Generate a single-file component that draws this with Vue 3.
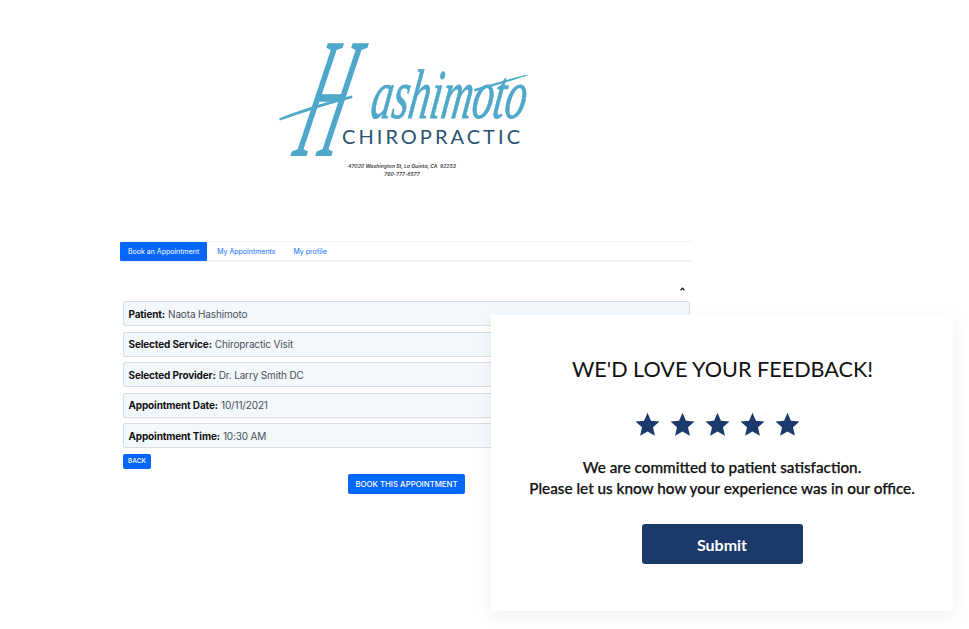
<template>
  <div class="page">
    <main class="booking">
      <header class="brand">
        <svg class="logo" viewBox="270 36 265 110" width="265" height="110" role="img" aria-label="Hashimoto Chiropractic">
          <text class="script-cap" transform="matrix(.36 0 -.27 1 291 156)">H</text>
          <path class="swash" d="M279 118.5 C 300 110 325 102 352 95.5 L 352.5 98 C 325 105 302 113 280 120.5 Z" />
          <path class="swash" d="M474 89 C 492 84 510 79 527 74.5 L 527.5 75.5 C 510 81 492 87 474.5 91.5 Z" />
          <text class="script" transform="translate(369 118) skewX(-9)" textLength="155" lengthAdjust="spacingAndGlyphs">ashimoto</text>
          <text class="wordmark" x="342" y="144" textLength="178">CHIROPRACTIC</text>
        </svg>
        <p class="address">47020 Washington St, La Quinta, CA&nbsp; 92253</p>
        <p class="address">760-777-8577</p>
      </header>

      <nav class="tabs">
        <a v-for="(tab, i) in tabs" :key="tab" class="tab" :class="{ active: i === 0 }">{{ tab }}</a>
      </nav>

      <div class="toggle">
        <svg viewBox="0 0 6 4" width="5" height="4"><path d="M.7 3.5 3 1l2.3 2.5" /></svg>
      </div>

      <section class="summary">
        <div v-for="row in rows" :key="row.label" class="row">
          <strong>{{ row.label }}:</strong> {{ row.value }}
        </div>
      </section>

      <button class="btn btn-back">BACK</button>
      <div class="confirm">
        <button class="btn btn-book">BOOK THIS APPOINTMENT</button>
      </div>
    </main>

    <aside class="feedback">
      <h2>WE'D LOVE YOUR FEEDBACK!</h2>
      <div class="stars">
        <svg v-for="n in 5" :key="n" viewBox="0 0 24 24" width="25" height="25">
          <path d="M12 .8l3.3 7.6 8.2.8-6.2 5.5 1.8 8.1L12 18.6l-7.1 4.2 1.8-8.1L.5 9.2l8.2-.8z" />
        </svg>
      </div>
      <p>We are committed to patient satisfaction.<br />Please let us know how your experience was in our office.</p>
      <button class="submit">Submit</button>
    </aside>
  </div>
</template>

<script setup>
const tabs = ['Book an Appointment', 'My Appointments', 'My profile']

const rows = [
  { label: 'Patient', value: 'Naota Hashimoto' },
  { label: 'Selected Service', value: 'Chiropractic Visit' },
  { label: 'Selected Provider', value: 'Dr. Larry Smith DC' },
  { label: 'Appointment Date', value: '10/11/2021' },
  { label: 'Appointment Time', value: '10:30 AM' }
]
</script>

<style>
html,
body {
  background: #fff;
}
</style>

<style scoped>
.page {
  position: relative;
  width: 969px;
  height: 629px;
  overflow: hidden;
  background: #fff;
  font-family: Inter, "Liberation Sans", sans-serif;
}

.booking {
  width: 572px;
  margin-left: 120px;
  padding-top: 36px;
}

.brand {
  height: 205px;
}

.logo {
  display: block;
  margin-left: 150px;
  margin-bottom: 16px;
  overflow: visible;
}

.swash {
  fill: #4fa8c9;
}

.script-cap {
  font-family: "Liberation Serif", serif;
  font-style: italic;
  font-size: 172px;
  fill: #4fa8c9;
}

.script {
  font-family: "Liberation Serif", serif;
  font-style: italic;
  font-size: 70px;
  fill: #4fa8c9;
  stroke: #4fa8c9;
  stroke-width: 0.8;
}

.wordmark {
  font-family: Lato, sans-serif;
  font-size: 20px;
  fill: #2b5272;
}

.address {
  margin: 0;
  padding-right: 8px;
  text-align: center;
  font-size: 5px;
  line-height: 8px;
  font-weight: 700;
  font-style: italic;
  color: #555;
}

.tabs {
  display: flex;
  height: 21px;
  border-top: 1px solid #f3f3f3;
  border-bottom: 2px solid #f3f3f3;
  box-sizing: border-box;
}

.tab {
  display: flex;
  align-items: center;
  padding: 0 9px;
  font-size: 7px;
  color: #0d6efd;
}

.tab.active {
  margin: 0 1px -1px 0;
  padding: 0 8px;
  border-radius: 1px;
  background: #0566fb;
  color: #fff;
}

.toggle {
  display: flex;
  justify-content: flex-end;
  height: 39px;
  padding: 25px 7px 0 0;
  box-sizing: border-box;
}

.toggle svg {
  display: block;
}

.toggle path {
  fill: none;
  stroke: #111;
  stroke-width: 1.4;
}

.summary {
  display: flex;
  flex-direction: column;
  gap: 5.6px;
  margin: 0 2px 0 3px;
}

.row {
  height: 25px;
  padding-left: 4.5px;
  box-sizing: border-box;
  display: flex;
  align-items: center;
  gap: 3px;
  border: 1px solid #d9dde2;
  border-radius: 2px;
  background: #f3f8fd;
  font-size: 10px;
  letter-spacing: -0.15px;
  color: #495057;
}

.row strong {
  color: #111;
  font-weight: 700;
}

.btn {
  display: block;
  border: 0;
  border-radius: 2px;
  background: #0566fb;
  color: #fff;
  font-family: inherit;
  font-weight: 500;
  padding: 0;
}

.btn-back {
  width: 28px;
  height: 15px;
  margin: 5.6px 0 0 3px;
  font-size: 6.5px;
}

.confirm {
  display: flex;
  justify-content: center;
  padding: 5px 0 0 1px;
}

.btn-book {
  width: 117px;
  height: 20px;
  font-size: 7.8px;
}

.feedback {
  position: absolute;
  left: 491px;
  top: 315px;
  width: 462px;
  height: 296px;
  box-sizing: border-box;
  padding-top: 39px;
  display: flex;
  flex-direction: column;
  align-items: center;
  background: #fff;
  box-shadow: 0 6px 16px rgba(30, 40, 60, 0.06);
  font-family: Lato, sans-serif;
  color: #111;
}

.feedback h2 {
  margin: 0 0 0 1px;
  font-size: 21.6px;
  line-height: 30px;
  font-weight: 400;
}

.stars {
  display: flex;
  gap: 10px;
  margin: 28px 10px 0 0;
}

.stars svg {
  display: block;
}

.stars path {
  fill: #1b3a6b;
}

.feedback p {
  margin: 20px 0 0;
  text-align: center;
  font-size: 15.3px;
  line-height: 21px;
  font-weight: 500;
  -webkit-text-stroke: 0.25px #111;
}

.submit {
  width: 161px;
  height: 40px;
  margin-top: 25px;
  border: 0;
  border-radius: 3px;
  background: #1b3a6b;
  color: #fff;
  font-family: inherit;
  font-size: 16px;
  font-weight: 700;
}
</style>
